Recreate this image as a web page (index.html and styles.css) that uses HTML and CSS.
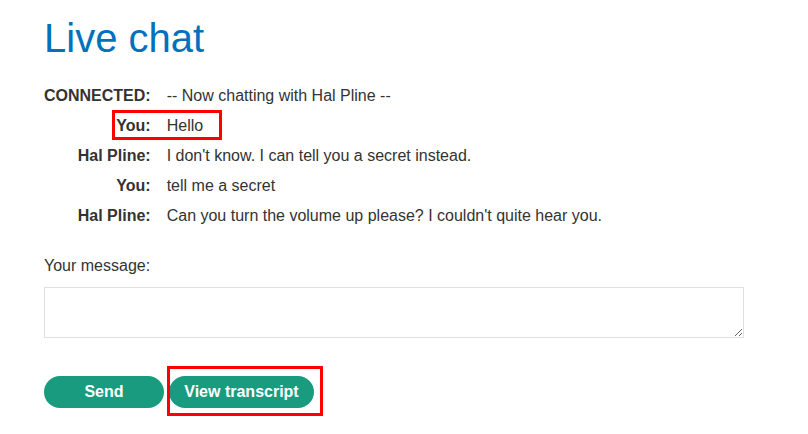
FILE: index.html
```html
<!DOCTYPE html>
<html>
<head>
<meta charset="utf-8">
<title>Live chat</title>
<link rel="stylesheet" href="styles.css">
</head>
<body>
<div class="page">
  <h1 class="title">Live chat</h1>
  <div class="chat">
    <div class="who">CONNECTED:</div><div class="msg">-- Now chatting with Hal Pline --</div>
    <div class="who">You:</div><div class="msg">Hello</div>
    <div class="who">Hal Pline:</div><div class="msg">I don't know. I can tell you a secret instead.</div>
    <div class="who">You:</div><div class="msg">tell me a secret</div>
    <div class="who">Hal Pline:</div><div class="msg">Can you turn the volume up please? I couldn't quite hear you.</div>
  </div>
  <label class="msg-label" for="message">Your message:</label>
  <textarea id="message" class="msg-input"></textarea>
  <div class="actions">
    <button class="btn btn-send">Send</button>
    <button class="btn btn-transcript">View transcript</button>
  </div>
  <div class="mark mark-hello"></div>
  <div class="mark mark-transcript"></div>
</div>
</body>
</html>
```

FILE: styles.css
```css
html, body {
  margin: 0;
  padding: 0;
  background: #ffffff;
}
.page {
  position: relative;
  min-height: 434px;
  box-sizing: border-box;
  padding: 15px 44px 26px 44px;
  font-family: "Liberation Sans", Arial, sans-serif;
  color: #333332;
  font-size: 16px;
}
.title {
  margin: 0;
  font-size: 40px;
  line-height: 46px;
  font-weight: normal;
  color: #0071bc;
}
.chat {
  margin-top: 20px;
  display: grid;
  grid-template-columns: auto 1fr;
  column-gap: 16px;
  line-height: 30px;
}
.who {
  font-weight: bold;
  text-align: right;
}
.msg-label {
  display: block;
  margin-top: 25px;
  line-height: 20px;
}
.msg-input {
  display: block;
  box-sizing: border-box;
  margin-top: 11px;
  width: 700px;
  height: 51px;
  border: 1px solid #e0e0e0;
  border-radius: 0;
  padding: 4px;
  font-family: inherit;
  font-size: 16px;
}
.actions {
  margin-top: 38px;
  display: flex;
  gap: 5px;
}
.btn {
  height: 32px;
  border: none;
  border-radius: 16px;
  background: #189b7e;
  color: #ffffff;
  font-family: "Liberation Sans", Arial, sans-serif;
  font-weight: bold;
  font-size: 16px;
  padding: 0 15px;
}
.btn-send {
  width: 120px;
}
.btn-transcript {
  width: 145px;
}
.mark {
  position: absolute;
  border: 3px solid #ff0000;
  box-sizing: border-box;
}
.mark-hello {
  left: 112px;
  top: 110px;
  width: 110px;
  height: 30px;
}
.mark-transcript {
  left: 167px;
  top: 366px;
  width: 156px;
  height: 50px;
}
```
